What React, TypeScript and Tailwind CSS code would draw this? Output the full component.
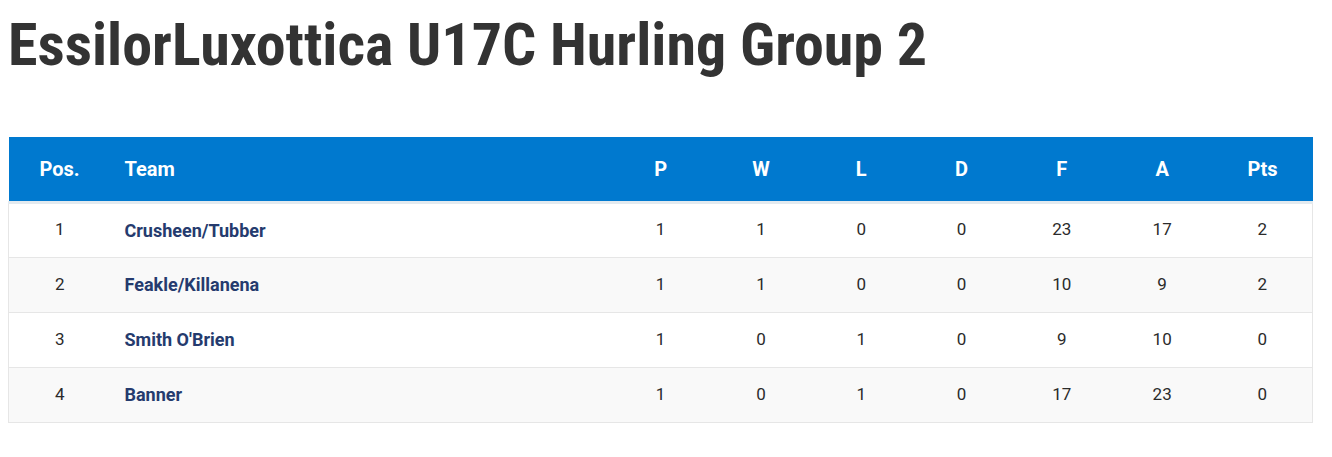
const rows = [
  { pos: 1, team: "Crusheen/Tubber", p: 1, w: 1, l: 0, d: 0, f: 23, a: 17, pts: 2 },
  { pos: 2, team: "Feakle/Killanena", p: 1, w: 1, l: 0, d: 0, f: 10, a: 9, pts: 2 },
  { pos: 3, team: "Smith O'Brien", p: 1, w: 0, l: 1, d: 0, f: 9, a: 10, pts: 0 },
  { pos: 4, team: "Banner", p: 1, w: 0, l: 1, d: 0, f: 17, a: 23, pts: 0 },
];

const stats = ["P", "W", "L", "D", "F", "A", "Pts"];

export default function App() {
  return (
    <div className="min-h-[457px] bg-white px-2 font-['Roboto',sans-serif]">
      <h1 className="pt-[10px] font-['Roboto_Condensed','Liberation_Sans_Narrow','Roboto',sans-serif] text-[60px] font-bold leading-[70px] text-[#333]">
        EssilorLuxottica U17C Hurling Group 2
      </h1>
      <table className="mt-[57px] w-[1304px] table-fixed border-collapse">
        <colgroup>
          <col className="w-[102px]" />
          <col className="w-[500px]" />
          {stats.map((s) => <col key={s} className="w-[100.3px]" />)}
        </colgroup>
        <thead>
          <tr className="h-[65px] border-b-[3px] border-[#e3eaef] bg-[#0079cf] text-[20px] font-bold text-white">
            <th className="text-center">Pos.</th>
            <th className="pl-[14px] text-left">Team</th>
            {stats.map((s) => <th key={s} className="text-center">{s}</th>)}
          </tr>
        </thead>
        <tbody>
          {rows.map((r, i) => (
            <tr key={r.pos} className={`h-[55px] border border-[#e6e6e6] text-[17px] text-[#2b2b2b] ${i % 2 ? "bg-[#f9f9f9]" : "bg-white"}`}>
              <td className="text-center">{r.pos}</td>
              <td className="pl-[14px] text-[18px] font-bold text-[#253b6e]">{r.team}</td>
              {[r.p, r.w, r.l, r.d, r.f, r.a, r.pts].map((v, j) => (
                <td key={j} className="text-center">{v}</td>
              ))}
            </tr>
          ))}
        </tbody>
      </table>
    </div>
  );
}
